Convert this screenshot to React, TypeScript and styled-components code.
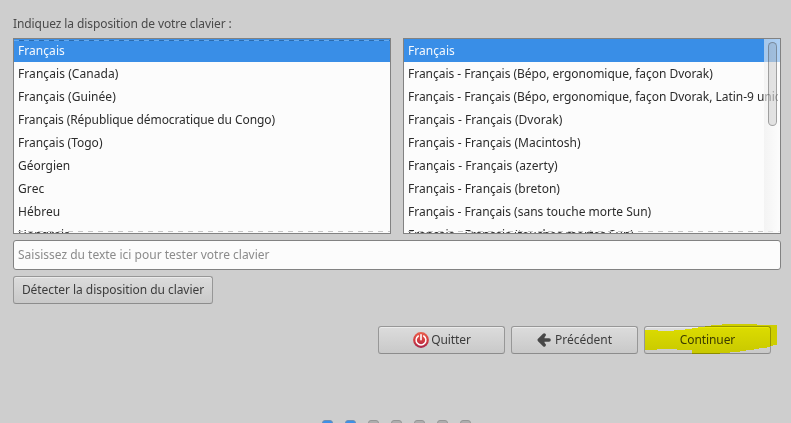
import React from "react";
import styled, { createGlobalStyle } from "styled-components";

const GlobalStyle = createGlobalStyle`
  html, body { margin: 0; background: #cecece; }
  body { overflow: hidden; }
  * { box-sizing: border-box; }
`;

const Page = styled.main`
  width: 791px;
  height: 423px;
  padding: 13px 10px 0 13px;
  overflow: hidden;
  display: flex;
  flex-direction: column;
  background: #cecece;
  color: #3c3c3c;
  font-family: "Noto Sans", "Liberation Sans", sans-serif;
  font-size: 12px;
`;

const Heading = styled.label`
  flex: none;
  height: 25px;
  line-height: 21px;
  letter-spacing: -0.09px;
  color: #4a4a4a;
`;

const Lists = styled.section`
  display: grid;
  flex: none;
  grid-template-columns: 378px 378px;
  gap: 12px;
`;

const ListBox = styled.div`
  position: relative;
  height: 196px;
  border: 1px solid #828282;
  background: #fcfcfc;
  overflow: hidden;
`;

const Row = styled.div<{ $selected?: boolean; $tracking: number }>`
  height: 23px;
  padding-left: 4px;
  border-right: 2px solid transparent;
  overflow: hidden;
  line-height: 23px;
  letter-spacing: ${(p) => p.$tracking}px;
  white-space: nowrap;
  color: ${(p) => (p.$selected ? "#f4f8fd" : "#2c2c2c")};
  background-color: ${(p) => (p.$selected ? "#398ee7" : "transparent")};
`;

const Overflow = styled.div<{ $edge: "top" | "bottom" }>`
  position: absolute;
  left: 0;
  right: 0;
  height: 1px;
  ${(p) =>
    p.$edge === "top"
      ? "top: 1px; background: repeating-linear-gradient(90deg, #65a9ee 0 5px, #2b6bae 5px 10px);"
      : "bottom: 1px; background: repeating-linear-gradient(90deg, #fcfcfc 0 4px, #c5c5c5 4px 9px, #fcfcfc 9px 10px);"}
`;

const ScrollTrack = styled.div`
  position: absolute;
  top: 0;
  right: 0;
  width: 16px;
  height: 100%;
  padding: 3px 3px 0 4px;
  background: linear-gradient(90deg, rgba(238, 238, 238, 0.6), rgba(252, 252, 252, 0.6));
`;

const ScrollThumb = styled.div`
  width: 9px;
  height: 84px;
  border: 1px solid rgba(70, 70, 70, 0.42);
  border-radius: 5px;
  background: rgba(90, 90, 90, 0.14);
`;

const TestInput = styled.input`
  flex: none;
  width: 768px;
  height: 30px;
  margin: 6px 0;
  padding: 0 4px 1px;
  border: 1px solid #828282;
  border-radius: 3px;
  outline: 0;
  background: #fcfcfc;
  font: inherit;
  &::placeholder { color: #8b8b8b; opacity: 1; }
`;

const Button = styled.button<{ $width: number; $tracking?: number }>`
  position: relative;
  display: flex;
  align-items: center;
  justify-content: center;
  flex: none;
  width: ${(p) => p.$width}px;
  height: 28px;
  padding: 0 0 1px;
  border: 1px solid #979797;
  border-bottom-color: #8c8c8c;
  border-radius: 3px;
  background: linear-gradient(#dcdcdc, #c9c9c9);
  box-shadow: inset 0 1px #ebebeb;
  color: #3c3c3c;
  font: inherit;
  letter-spacing: ${(p) => p.$tracking ?? 0}px;
  white-space: nowrap;
`;

const Actions = styled.nav`
  display: flex;
  flex: none;
  justify-content: flex-end;
  gap: 6px;
  margin-top: 22px;
  padding-right: 10px;
`;

const PowerSvg = styled.svg`
  flex: none;
  width: 16px;
  height: 16px;
  margin: 0 2px 0 1px;
`;

const ArrowSvg = styled.svg`
  flex: none;
  width: 14px;
  height: 14px;
  margin-right: 4px;
`;

const MarkerSvg = styled.svg`
  position: absolute;
  left: -1px;
  top: -4px;
  width: 134px;
  height: 33px;
  mix-blend-mode: multiply;
  pointer-events: none;
`;

const Steps = styled.footer`
  display: flex;
  flex: none;
  gap: 12px;
  margin: 66px 0 0 309px;
`;

const Step = styled.span<{ $done: boolean }>`
  flex: none;
  width: 11px;
  height: 11px;
  border: 1px solid ${(p) => (p.$done ? "#6f8fb3" : "#969696")};
  border-radius: 3px;
  background: ${(p) => (p.$done ? "#3c90e8" : "#aeaeae")};
`;

type Item = [label: string, tracking: number];

const languages: Item[] = [
  ["Français", 0.05],
  ["Français (Canada)", 0.07],
  ["Français (Guinée)", 0.05],
  ["Français (République démocratique du Congo)", -0.09],
  ["Français (Togo)", 0],
  ["Géorgien", 0],
  ["Grec", 0.1],
  ["Hébreu", 0.05],
  ["Hongrois", 0],
];

const variants: Item[] = [
  ["Français", 0.05],
  ["Français - Français (Bépo, ergonomique, façon Dvorak)", -0.03],
  ["Français - Français (Bépo, ergonomique, façon Dvorak, Latin-9 unicode)", -0.03],
  ["Français - Français (Dvorak)", 0.04],
  ["Français - Français (Macintosh)", 0.02],
  ["Français - Français (azerty)", 0.07],
  ["Français - Français (breton)", 0.03],
  ["Français - Français (sans touche morte Sun)", 0],
  ["Français - Français (touches mortes Sun)", 0],
];

const rows = (items: Item[]) =>
  items.map(([label, tracking], i) => (
    <Row key={label} $selected={i === 0} $tracking={tracking}>
      {label}
    </Row>
  ));

const PowerIcon = () => (
  <PowerSvg viewBox="0 0 16 16" fill="none">
    <defs>
      <linearGradient id="power" x1="0" y1="0" x2="0" y2="1">
        <stop offset="0" stopColor="#e8604f" />
        <stop offset="0.5" stopColor="#d43c40" />
        <stop offset="1" stopColor="#a8264a" />
      </linearGradient>
    </defs>
    <circle cx="8" cy="8" r="7.9" fill="url(#power)" />
    <path d="M5.3 4a4.9 4.9 0 1 0 5.4 0" stroke="#fff" strokeWidth="1.5" strokeLinecap="round" />
    <path d="M8 2.8v4.9" stroke="#fff" strokeWidth="1.6" strokeLinecap="round" />
  </PowerSvg>
);

const ArrowIcon = () => (
  <ArrowSvg viewBox="0 0 14 14" fill="none" stroke="#484848" strokeLinecap="round" strokeLinejoin="round">
    <path d="M7.2 2 2.2 7l5 5" strokeWidth="3.3" />
    <path d="M3 7h9" strokeWidth="3.6" />
    <path d="M3 7l4-3.4v6.8z" fill="#484848" />
  </ArrowSvg>
);

export default function App() {
  return (
    <>
      <GlobalStyle />
      <Page>
        <Heading htmlFor="keyboard-test">Indiquez la disposition de votre clavier :</Heading>
        <Lists>
          <ListBox>
            {rows(languages)}
            <Overflow $edge="top" />
            <Overflow $edge="bottom" />
          </ListBox>
          <ListBox>
            {rows(variants)}
            <Overflow $edge="bottom" />
            <ScrollTrack>
              <ScrollThumb />
            </ScrollTrack>
          </ListBox>
        </Lists>
        <TestInput id="keyboard-test" placeholder="Saisissez du texte ici pour tester votre clavier" />
        <Button $width={200} $tracking={-0.05}>
          Détecter la disposition du clavier
        </Button>
        <Actions>
          <Button $width={127} $tracking={-0.1}>
            <PowerIcon />
            Quitter
          </Button>
          <Button $width={127}>
            <ArrowIcon />
            Précédent
          </Button>
          <Button $width={127} $tracking={-0.1}>
            Continuer
            <MarkerSvg viewBox="0 0 134 33">
              <path
                d="M1 7h13v1h16v-1h11v-1h7v-1h6v-1h7v-1h6v-1h11v-1h35v1h20v20h-4v1h-3v1h-3v1h-8v1h-5v1h-8v1h-6v1h-10v1h-10v1h-28v-4h-15v-1h-20v1h-12z"
                fill="#ffff00"
              />
            </MarkerSvg>
          </Button>
        </Actions>
        <Steps>
          {[true, true, false, false, false, false, false].map((done, i) => (
            <Step key={i} $done={done} />
          ))}
        </Steps>
      </Page>
    </>
  );
}
